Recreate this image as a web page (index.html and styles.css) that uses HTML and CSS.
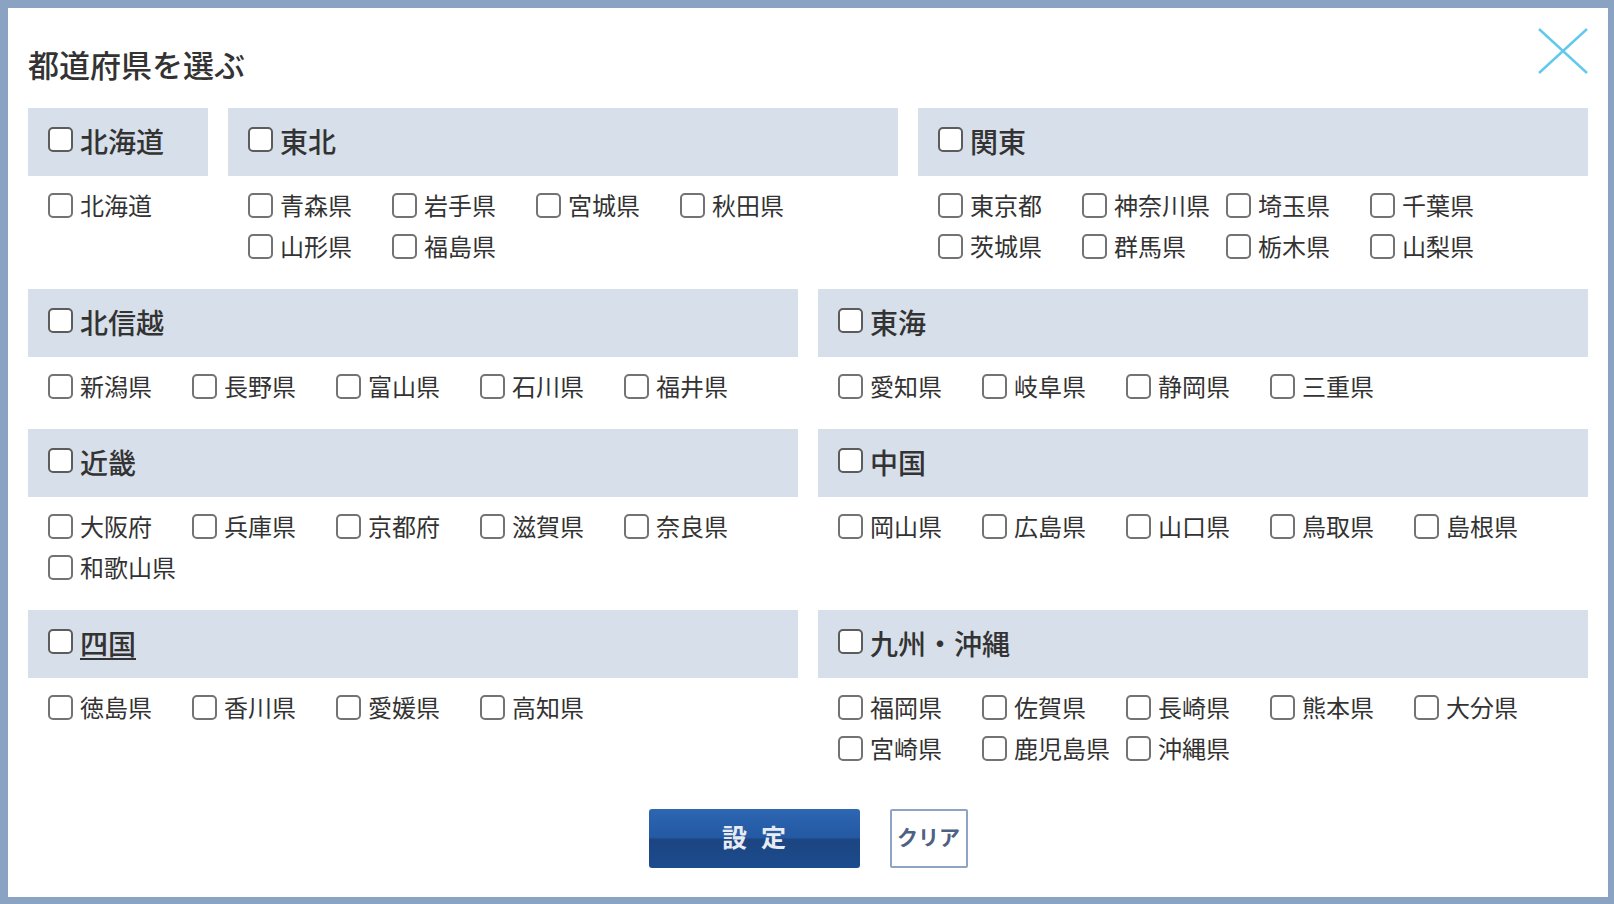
FILE: index.html
```html
<!DOCTYPE html>
<html lang="ja">
<head>
  <meta charset="UTF-8">
  <title>都道府県を選ぶ</title>
  <link rel="stylesheet" href="styles.css">
</head>
<body>

  <div class="modal">
    <h2 class="modal-title">都道府県を選ぶ</h2>

    <button class="close-btn" aria-label="閉じる">
      <svg width="50" height="46" viewBox="0 0 50 46">
        <line x1="1" y1="1" x2="49" y2="45" stroke="#62c9ec" stroke-width="2.4" />
        <line x1="49" y1="1" x2="1" y2="45" stroke="#62c9ec" stroke-width="2.4" />
      </svg>
    </button>

    <div class="area-row row-top">
      <section class="area">
        <label class="area-head"><input type="checkbox"><span>北海道</span></label>
        <ul class="prefs">
          <li><label><input type="checkbox"><span>北海道</span></label></li>
        </ul>
      </section>
      <section class="area">
        <label class="area-head"><input type="checkbox"><span>東北</span></label>
        <ul class="prefs">
          <li><label><input type="checkbox"><span>青森県</span></label></li>
          <li><label><input type="checkbox"><span>岩手県</span></label></li>
          <li><label><input type="checkbox"><span>宮城県</span></label></li>
          <li><label><input type="checkbox"><span>秋田県</span></label></li>
          <li><label><input type="checkbox"><span>山形県</span></label></li>
          <li><label><input type="checkbox"><span>福島県</span></label></li>
        </ul>
      </section>
      <section class="area">
        <label class="area-head"><input type="checkbox"><span>関東</span></label>
        <ul class="prefs">
          <li><label><input type="checkbox"><span>東京都</span></label></li>
          <li><label><input type="checkbox"><span>神奈川県</span></label></li>
          <li><label><input type="checkbox"><span>埼玉県</span></label></li>
          <li><label><input type="checkbox"><span>千葉県</span></label></li>
          <li><label><input type="checkbox"><span>茨城県</span></label></li>
          <li><label><input type="checkbox"><span>群馬県</span></label></li>
          <li><label><input type="checkbox"><span>栃木県</span></label></li>
          <li><label><input type="checkbox"><span>山梨県</span></label></li>
        </ul>
      </section>
    </div>

    <div class="area-row">
      <section class="area">
        <label class="area-head"><input type="checkbox"><span>北信越</span></label>
        <ul class="prefs">
          <li><label><input type="checkbox"><span>新潟県</span></label></li>
          <li><label><input type="checkbox"><span>長野県</span></label></li>
          <li><label><input type="checkbox"><span>富山県</span></label></li>
          <li><label><input type="checkbox"><span>石川県</span></label></li>
          <li><label><input type="checkbox"><span>福井県</span></label></li>
        </ul>
      </section>
      <section class="area">
        <label class="area-head"><input type="checkbox"><span>東海</span></label>
        <ul class="prefs">
          <li><label><input type="checkbox"><span>愛知県</span></label></li>
          <li><label><input type="checkbox"><span>岐阜県</span></label></li>
          <li><label><input type="checkbox"><span>静岡県</span></label></li>
          <li><label><input type="checkbox"><span>三重県</span></label></li>
        </ul>
      </section>
    </div>

    <div class="area-row">
      <section class="area">
        <label class="area-head"><input type="checkbox"><span>近畿</span></label>
        <ul class="prefs">
          <li><label><input type="checkbox"><span>大阪府</span></label></li>
          <li><label><input type="checkbox"><span>兵庫県</span></label></li>
          <li><label><input type="checkbox"><span>京都府</span></label></li>
          <li><label><input type="checkbox"><span>滋賀県</span></label></li>
          <li><label><input type="checkbox"><span>奈良県</span></label></li>
          <li><label><input type="checkbox"><span>和歌山県</span></label></li>
        </ul>
      </section>
      <section class="area">
        <label class="area-head"><input type="checkbox"><span>中国</span></label>
        <ul class="prefs">
          <li><label><input type="checkbox"><span>岡山県</span></label></li>
          <li><label><input type="checkbox"><span>広島県</span></label></li>
          <li><label><input type="checkbox"><span>山口県</span></label></li>
          <li><label><input type="checkbox"><span>鳥取県</span></label></li>
          <li><label><input type="checkbox"><span>島根県</span></label></li>
        </ul>
      </section>
    </div>

    <div class="area-row">
      <section class="area">
        <label class="area-head is-hover"><input type="checkbox"><span>四国</span></label>
        <ul class="prefs">
          <li><label><input type="checkbox"><span>徳島県</span></label></li>
          <li><label><input type="checkbox"><span>香川県</span></label></li>
          <li><label><input type="checkbox"><span>愛媛県</span></label></li>
          <li><label><input type="checkbox"><span>高知県</span></label></li>
        </ul>
      </section>
      <section class="area">
        <label class="area-head"><input type="checkbox"><span>九州・沖縄</span></label>
        <ul class="prefs">
          <li><label><input type="checkbox"><span>福岡県</span></label></li>
          <li><label><input type="checkbox"><span>佐賀県</span></label></li>
          <li><label><input type="checkbox"><span>長崎県</span></label></li>
          <li><label><input type="checkbox"><span>熊本県</span></label></li>
          <li><label><input type="checkbox"><span>大分県</span></label></li>
          <li><label><input type="checkbox"><span>宮崎県</span></label></li>
          <li><label><input type="checkbox"><span>鹿児島県</span></label></li>
          <li><label><input type="checkbox"><span>沖縄県</span></label></li>
        </ul>
      </section>
    </div>

    <div class="actions">
      <button class="btn-submit">設定</button>
      <button class="btn-clear">クリア</button>
    </div>
  </div>

</body>
</html>
```

FILE: styles.css
```css
html, body {
  margin: 0;
  height: 100%;
}

body {
  font-family: "Noto Sans CJK JP", "Noto Sans", sans-serif;
  color: #333;
  background-color: #8aa3c3;
  padding: 8px 6px 7px 8px;
  box-sizing: border-box;
}

.modal {
  position: relative;
  background-color: #fff;
  height: 100%;
  box-sizing: border-box;
  padding: 36px 20px 30px 20px;
}

.modal-title {
  margin: 0 0 24px 0;
  font-size: 31px;
  font-weight: 500;
  line-height: 40px;
}

.close-btn {
  position: absolute;
  top: 20px;
  right: 20px;
  width: 50px;
  height: 46px;
  padding: 0;
  border: none;
  background: none;
  cursor: pointer;
}

.close-btn svg {
  display: block;
}

.area-row {
  display: grid;
  grid-template-columns: 1fr 1fr;
  column-gap: 20px;
  margin-bottom: 20px;
}

.area-row.row-top {
  grid-template-columns: 180px 1fr 1fr;
}

.area-head {
  display: flex;
  align-items: center;
  gap: 7px;
  height: 68px;
  box-sizing: border-box;
  padding: 0 0 3px 20px;
  background-color: #d7dfea;
  font-size: 28px;
  font-weight: 500;
  cursor: pointer;
}

.area-head.is-hover span {
  text-decoration: underline;
  text-underline-offset: 3px;
}

input[type="checkbox"] {
  appearance: none;
  -webkit-appearance: none;
  width: 25px;
  height: 25px;
  margin: 0;
  flex-shrink: 0;
  border: 2px solid #737373;
  border-radius: 5px;
  background-color: #fff;
  box-sizing: border-box;
}

.area-head input[type="checkbox"] {
  border-color: #5c5c5c;
  margin-top: -2px;
}

.prefs {
  list-style: none;
  margin: 0;
  padding: 9px 0 2px 20px;
  display: flex;
  flex-wrap: wrap;
}

.prefs li {
  width: 144px;
  height: 41px;
}

.prefs label {
  display: flex;
  align-items: center;
  gap: 7px;
  height: 100%;
  font-size: 24px;
  white-space: nowrap;
  cursor: pointer;
}

.prefs label span {
  margin-top: -3px;
}

.actions {
  display: flex;
  justify-content: center;
  gap: 30px;
  margin-top: 38px;
}

.btn-submit {
  width: 211px;
  height: 59px;
  border: none;
  border-radius: 3px;
  background: linear-gradient(#2d66b2 0%, #2459a3 48%, #1c4581 52%, #1c4b8e 100%);
  color: #e8ebf1;
  font-family: inherit;
  font-size: 25px;
  font-weight: bold;
  letter-spacing: 14px;
  text-indent: 14px;
  padding: 0 0 5px 0;
  cursor: pointer;
}

.btn-clear {
  width: 78px;
  height: 59px;
  border: 2px solid #8fa4c4;
  border-radius: 2px;
  background-color: #fff;
  color: #4e6184;
  font-family: inherit;
  font-size: 21px;
  font-weight: bold;
  padding: 0 0 5px 0;
  cursor: pointer;
}
```
